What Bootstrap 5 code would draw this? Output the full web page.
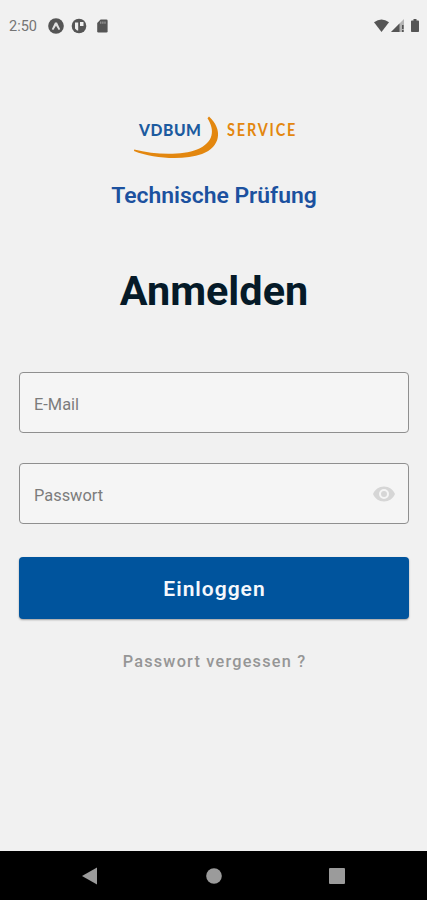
<!DOCTYPE html>
<html lang="de">
<head>
<meta charset="utf-8">
<meta name="viewport" content="width=device-width, initial-scale=1">
<title>Anmelden</title>
<link href="https://cdn.jsdelivr.net/npm/bootstrap@5.3.0/dist/css/bootstrap.min.css" rel="stylesheet">
<style>
body { font-family: Roboto, sans-serif; background: #f1f1f1; height: 900px; overflow: hidden; }
svg { display: block; flex: none; }
.status-bar { height: 52px; padding: 0 6px 0 9px; color: #5c5c5c; }
.clock { font-size: 14.5px; line-height: 20px; width: 39px; color: #757575; padding-top: 2px; }
.login { padding: 0 18px 0 19px; }
.brand { margin: 59px 0 0 -1px; }
.subtitle { font-size: 22.9px; line-height: 28px; font-weight: 600; color: #1c519f; margin-top: 21px; }
.headline { font-size: 41.4px; line-height: 48px; font-weight: 700; color: #051a28; margin-top: 57px; }
.login-form { margin-top: 57px; }
.field { height: 61px; background: #f5f5f5; border: 1px solid #8f8f8f; border-radius: 4px; padding: 4px 12px 0 14px; margin-bottom: 30px; }
.field .form-control { font-size: 16.4px; line-height: 24px; color: #757575; }
.field .form-control::placeholder { color: #7c7c7c; opacity: 1; }
.field svg { margin-top: -3px; }
.btn-login { height: 62px; margin-top: 3px; background: #00549d; color: #f5f8fc; border: 0; border-radius: 4px; font-size: 21px; font-weight: 600; letter-spacing: 1px; box-shadow: 0 1px 2px rgba(0,0,0,.35); padding: 3px 0 0 1px; }
.btn-login:hover { background: #00498a; color: #fff; }
.forgot { font-size: 16.3px; line-height: 24px; font-weight: 500; letter-spacing: 1.2px; color: #969696; margin-top: 31px; padding-left: 1px; }
.android-nav { height: 49px; background: #000; }
</style>
</head>
<body class="d-flex flex-column">
<header class="status-bar d-flex align-items-center">
  <span class="clock">2:50</span>
  <svg width="60" height="16" viewBox="0 0 60 16" fill="#555">
    <circle cx="8" cy="8" r="7.800"/>
    <path d="M3.800 11.300 7 4.500h2l3.200 6.800-1.500.8L8 7.800l-2.700 4.300z" fill="#e0e0e0"/>
    <circle cx="31" cy="8" r="7.300"/>
    <path d="M27 4.500h3.200v8H29L27 10.500zM32 4h3.500v4H32z" fill="#eee"/>
    <path d="M52.600 1.500h5.800q1.200 0 1.200 1.200v10.600q0 1.200-1.200 1.200h-8q-1.200 0-1.200-1.200V5z"/>
    <path d="M52.300 3.500h1v2.200h-1zm2.100 0h1v2.200h-1zm2.100 0h1v2.200h-1z" fill="#aaa"/>
  </svg>
  <svg class="ms-auto" width="48" height="16" viewBox="0 0 48 16" fill="#555">
    <path d="M0 4.200Q7.500-1.200 15 4.200L7.500 14z" transform="translate(1 0)"/>
    <path d="M31 1v13H18z" fill="#b5b5b5"/>
    <path d="M26.500 5.500V14H18zM29 7h1.600v4H29zm0 5h1.600v2H29z"/>
    <path d="M40.500 2.600V1h3v1.600h1.700q.8 0 .8.8v9.800q0 .8-.8.8h-6.400q-.8 0-.8-.8V3.400q0-.8.8-.8z"/>
  </svg>
</header>

<main class="login flex-grow-1 d-flex flex-column">
  <svg class="brand align-self-center" width="164" height="50" viewBox="132 111 164 50" role="img" aria-label="VDBUM Service">
    <path d="M209 116.500C223 129 221 147 202 154C184 160.500 154 159 134 151L134.200 149.500C155 155 182 155.500 197 149.500C214 142.500 215 130 207.500 118.200Z" fill="#e3870f"/>
    <g font-family="Lato, sans-serif" font-size="17">
      <text transform="translate(139 136.400) scale(.92 1)" font-weight="900" fill="#1c5b9f" textLength="67.400">VDBUM</text>
      <text transform="translate(227 136.400) scale(.85 1)" font-weight="700" fill="#e3870f" textLength="80.500">SERVICE</text>
    </g>
  </svg>
  <div class="subtitle text-center">Technische Prüfung</div>
  <h1 class="headline text-center mb-0">Anmelden</h1>
  <form class="login-form">
    <div class="field d-flex align-items-center">
      <input class="form-control border-0 bg-transparent shadow-none p-0" type="email" placeholder="E-Mail" aria-label="E-Mail">
    </div>
    <div class="field d-flex align-items-center">
      <input class="form-control border-0 bg-transparent shadow-none p-0" type="password" placeholder="Passwort" aria-label="Passwort">
      <svg width="24" height="24" viewBox="0 0 24 24" fill="#d6d6d6"><path d="M12 4.500C7 4.500 2.730 7.610 1 12c1.730 4.390 6 7.500 11 7.500s9.270-3.110 11-7.500c-1.730-4.390-6-7.500-11-7.500zM12 17a5 5 0 1 1 0-10 5 5 0 0 1 0 10zm0-8a3 3 0 1 0 0 6 3 3 0 0 0 0-6z"/></svg>
    </div>
    <button class="btn btn-login w-100" type="button">Einloggen</button>
  </form>
  <a class="forgot text-center text-decoration-none" href="#">Passwort vergessen ?</a>
</main>

<nav class="android-nav d-flex align-items-center justify-content-center">
  <svg width="264" height="18" viewBox="0 0 264 18" fill="#9b9b9b"><path d="M0 9 15 .5v17z"/><circle cx="132" cy="9" r="7.800"/><rect x="247" y="1" width="16" height="16" rx="1"/></svg>
</nav>
<script src="https://cdn.jsdelivr.net/npm/bootstrap@5.3.0/dist/js/bootstrap.bundle.min.js"></script>
</body>
</html>
